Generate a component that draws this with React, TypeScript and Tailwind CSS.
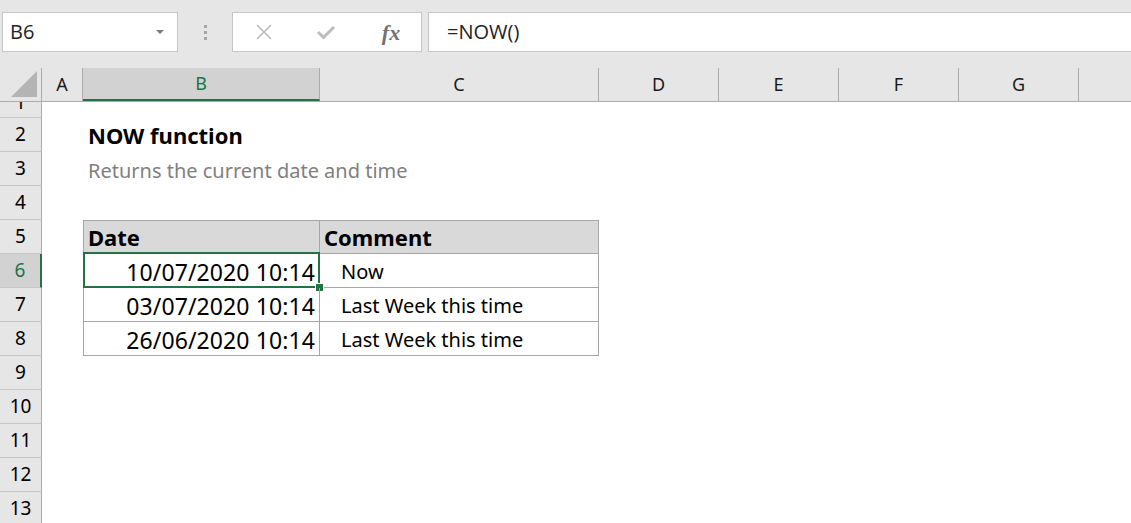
import React from 'react'

const font = { fontFamily: '"Noto Sans", "Open Sans", sans-serif' }

const cols = [
  { k: 'A', w: 'w-[41px]' },
  { k: 'B', w: 'w-[237px]' },
  { k: 'C', w: 'w-[279px]' },
  { k: 'D', w: 'w-[120px]' },
  { k: 'E', w: 'w-[120px]' },
  { k: 'F', w: 'w-[120px]' },
  { k: 'G', w: 'w-[120px]' },
]

const rows = [2, 3, 4, 5, 6, 7, 8, 9, 10, 11, 12, 13]

const data: Record<number, { b?: React.ReactNode; c?: React.ReactNode }> = {
  2: { b: <span className="pl-[5px] font-bold text-[22px] text-black">NOW function</span> },
  3: { b: <span className="pl-[5px] pt-[3px] text-[#7f7f7f]">Returns the current date and time</span> },
  5: {
    b: <span className="pl-[4px] font-bold text-[22px]">Date</span>,
    c: <span className="pl-[4px] font-bold text-[22px]">Comment</span>,
  },
  6: { b: '10/07/2020 10:14', c: 'Now' },
  7: { b: '03/07/2020 10:14', c: 'Last Week this time' },
  8: { b: '26/06/2020 10:14', c: 'Last Week this time' },
}

function Toolbar() {
  return (
    <div className="h-[68px] shrink-0 bg-[#e6e6e6] flex items-start pt-[12px] pl-[2px]">
      <div className="w-[176px] h-[40px] bg-white border border-[#c6c6c6] flex items-center justify-between pl-[7px] pr-[13px]">
        <span className="text-[20px] text-[#222]" style={{ fontFamily: '"Open Sans", "Noto Sans", sans-serif' }}>B6</span>
        <div className="w-0 h-0 border-l-[4px] border-r-[4px] border-t-[4px] border-l-transparent border-r-transparent border-t-[#7a7a7a]" />
      </div>
      <div className="w-[54px] h-[40px] flex flex-col items-center justify-center gap-[3px]">
        <div className="w-[3px] h-[3px] bg-[#a6a6a6]" />
        <div className="w-[3px] h-[3px] bg-[#a6a6a6]" />
        <div className="w-[3px] h-[3px] bg-[#a6a6a6]" />
      </div>
      <div className="w-[190px] h-[40px] bg-white border border-[#c6c6c6] flex items-center">
        <div className="w-[62px] flex justify-center">
          <svg width="18" height="18" viewBox="0 0 18 18">
            <path d="M2 2 L16 16 M16 2 L2 16" stroke="#b9b9b9" strokeWidth="1.6" fill="none" />
          </svg>
        </div>
        <div className="w-[62px] flex justify-center">
          <svg width="20" height="16" viewBox="0 0 20 16">
            <path d="M2 8 L7.5 13.5 L18 3" stroke="#bcbcbc" strokeWidth="3" fill="none" />
          </svg>
        </div>
        <div className="flex-1 flex justify-center pl-[4px]">
          <span className="italic text-[22px] text-[#737373] font-semibold" style={{ fontFamily: '"Liberation Serif", serif' }}>fx</span>
        </div>
      </div>
      <div className="ml-[6px] flex-1 h-[40px] bg-white border border-[#c6c6c6] border-r-0 flex items-center pl-[18px]">
        <span className="text-[20px] text-[#222]" style={{ fontFamily: '"Open Sans", "Noto Sans", sans-serif' }}>=NOW()</span>
      </div>
    </div>
  )
}

function ColumnHeader() {
  return (
    <div className="h-[34px] shrink-0 flex bg-[#e6e6e6] border-b border-[#ababab] text-[18px] text-[#1a1a1a]">
      <div className="w-[42px] shrink-0 border-r border-[#ababab] flex items-end justify-end p-[4px]">
        <div className="w-0 h-0" style={{ borderBottom: '26px solid #b4b4b4', borderLeft: '26px solid transparent' }} />
      </div>
      {cols.map((c) => (
        <div
          key={c.k}
          className={`${c.w} shrink-0 border-r border-[#ababab] flex items-center justify-center ${c.k === 'B' ? 'bg-[#d2d2d2] text-[#217346] border-b-2 border-b-[#217346]' : ''}`}
        >
          {c.k}
        </div>
      ))}
      <div className="flex-1" />
    </div>
  )
}

function Row({ n }: { n: number }) {
  const d = data[n] || {}
  const inTable = n >= 5 && n <= 8
  const head = n === 5
  const sel = n === 6
  const body = n >= 6 && n <= 8
  return (
    <div className="h-[34px] flex shrink-0">
      <div
        className={`w-[42px] shrink-0 border-b border-[#c6c6c6] flex items-center justify-center text-[19px] ${sel ? 'bg-[#d2d2d2] text-[#217346] border-r-2 border-r-[#217346]' : 'bg-[#e6e6e6] text-black border-r border-r-[#ababab]'}`}
      >
        {n}
      </div>
      <div className="w-[41px] shrink-0" />
      <div
        className={`w-[237px] shrink-0 relative flex items-center text-[20px] text-black ${inTable ? 'border-l border-r border-b border-[#a6a6a6]' : ''} ${head ? 'border-t bg-[#d9d9d9]' : ''} ${body ? 'justify-end pr-[4px]' : ''}`}
      >
        {body ? (
          <span className="text-[23px] tracking-[0.1px] pt-[4px]">{d.b}</span>
        ) : (
          d.b && <span className="whitespace-nowrap flex">{d.b}</span>
        )}
        {sel && (
          <>
            <div className="absolute -top-[2px] -left-[1px] -right-[1px] -bottom-[1px] border-2 border-[#217346]" />
            <div className="absolute -bottom-[5px] -right-[5px] w-[9px] h-[9px] bg-[#217346] border border-white" />
          </>
        )}
      </div>
      <div
        className={`w-[279px] shrink-0 flex items-center text-[20px] text-black ${inTable ? 'border-r border-b border-[#a6a6a6]' : ''} ${head ? 'border-t bg-[#d9d9d9]' : ''} ${body ? 'pl-[21px] pt-[3px]' : ''}`}
      >
        {d.c}
      </div>
      <div className="flex-1" />
    </div>
  )
}

export default function App() {
  return (
    <div className="w-[1131px] h-[523px] overflow-hidden bg-white flex flex-col" style={font}>
      <Toolbar />
      <ColumnHeader />
      <div className="h-[16px] flex shrink-0 overflow-hidden">
        <div className="w-[42px] shrink-0 bg-[#e6e6e6] border-r border-b border-[#ababab] border-b-[#c6c6c6] flex flex-col justify-end items-center overflow-hidden">
          <div className="h-[34px] shrink-0 flex items-center text-[19px] -mb-[2px]">1</div>
        </div>
      </div>
      {rows.map((n) => (
        <Row key={n} n={n} />
      ))}
    </div>
  )
}
